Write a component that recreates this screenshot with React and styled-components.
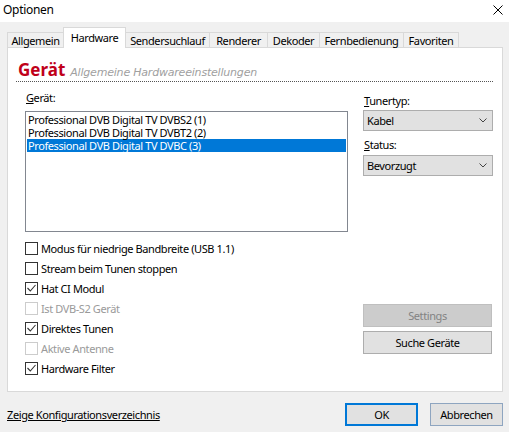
import React from "react"
import styled, { createGlobalStyle } from "styled-components"

const GlobalStyle = createGlobalStyle`
  html, body {
    margin: 0;
    padding: 0;
    background: #f0f0f0;
  }
  body {
    font-family: "Noto Sans", "Open Sans", sans-serif;
    font-size: 11px;
    letter-spacing: -0.4px;
    color: #000;
  }
  * { box-sizing: border-box; }
`

// fenster
const Window = styled.div`
  width: 509px;
  height: 432px;
  display: flex;
  flex-direction: column;
  background: #f0f0f0;
  overflow: hidden;
`
const TitleBar = styled.div`
  height: 22px;
  background: #fff;
  display: flex;
  justify-content: space-between;
  padding: 1px 6px 0 3px;
`
const Title = styled.span`
  font-size: 12px;
  line-height: 17px;
  letter-spacing: -0.3px;
`
const CloseIcon = styled.svg`
  margin-top: 4px;
`

// reiter
const Body = styled.div`
  padding: 5px 6px 0 7px;
`
const TabStrip = styled.div`
  display: flex;
  align-items: flex-end;
  height: 20px;
`
const Tab = styled.div`
  width: ${p => p.w}px;
  height: ${p => (p.active ? 21 : 15)}px;
  margin-bottom: ${p => (p.active ? -1 : 0)}px;
  margin-left: -1px;
  &:first-child { margin-left: 0; }
  border: 1px solid #d9d9d9;
  border-bottom: none;
  background: ${p => (p.active ? "#fff" : "#f0f0f0")};
  position: relative;
  z-index: ${p => (p.active ? 1 : 0)};
  display: flex;
  align-items: center;
  justify-content: center;
  white-space: nowrap;
  padding-bottom: ${p => (p.active ? 2 : 0)}px;
`
const Panel = styled.div`
  height: 345px;
  background: #fff;
  border: 1px solid #d9d9d9;
  padding: 0 9px 0 8px;
  display: flex;
  flex-direction: column;
`

// kopfzeile
const Header = styled.div`
  display: flex;
  align-items: baseline;
  gap: 5px;
  padding: 11px 0 1px 2px;
  border-bottom: 1px dotted #555;
  letter-spacing: 0;
`
const HeadTitle = styled.span`
  font-size: 17px;
  line-height: 21px;
  font-weight: bold;
  color: #c0001a;
`
const HeadSub = styled.span`
  font-family: "DejaVu Sans", sans-serif;
  font-style: italic;
  font-size: 11px;
  letter-spacing: -0.2px;
  color: #a0a0a0;
`

// inhalt
const Content = styled.div`
  display: grid;
  grid-template-columns: 323px 130px;
  justify-content: space-between;
  padding-left: 9px;
`
const Column = styled.div`
  display: flex;
  flex-direction: column;
`
const Label = styled.div`
  line-height: 16px;
  margin-top: ${p => p.mt}px;
  padding-left: 1px;
`
const ListBox = styled.div`
  margin-top: 5px;
  height: 121px;
  border: 1px solid #828790;
  padding: 1px;
`
const ListItem = styled.div`
  height: 13px;
  line-height: 13px;
  padding-left: 1px;
  white-space: nowrap;
  background: ${p => (p.selected ? "#0078d7" : "transparent")};
  color: ${p => (p.selected ? "#fff" : "#000")};
`
const Checks = styled.div`
  margin-top: 6px;
  display: flex;
  flex-direction: column;
`
const CheckRow = styled.label`
  height: 20px;
  display: flex;
  align-items: center;
  gap: 3px;
  color: ${p => (p.disabled ? "#9a9a9a" : "#000")};
`
const Box = styled.span`
  width: 13px;
  height: 13px;
  border: 1px solid ${p => (p.disabled ? "#cccccc" : "#333")};
  background: #fff;
  display: flex;
`
const Combo = styled.div`
  margin-top: ${p => p.mt}px;
  height: 21px;
  background: #e1e1e1;
  border: 1px solid #adadad;
  display: flex;
  align-items: center;
  justify-content: space-between;
  padding: 0 5px 0 3px;
`
const Button = styled.div`
  width: ${p => p.w || 129}px;
  height: 23px;
  margin-top: ${p => p.mt || 0}px;
  display: flex;
  align-items: center;
  justify-content: center;
  background: ${p => (p.disabled ? "#cccccc" : "#e1e1e1")};
  color: ${p => (p.disabled ? "#838383" : "#000")};
  border: ${p => (p.primary ? "2px solid #0078d7" : `1px solid ${p.border || (p.disabled ? "#bfbfbf" : "#adadad")}`)};
`

// fusszeile
const Footer = styled.div`
  flex: 1;
  display: flex;
  align-items: center;
  padding: 5px 6px 0 7px;
`
const Link = styled.a`
  color: #000;
  text-decoration: underline;
  margin-right: auto;
  cursor: pointer;
`
const FooterButtons = styled.div`
  display: flex;
  gap: 12px;
`

const Check = () => (
  <svg width="11" height="11" viewBox="0 0 11 11">
    <polyline points="1.5,5 4.3,8 9.5,2" fill="none" stroke="#333" strokeWidth="1.1" />
  </svg>
)

const Chevron = () => (
  <svg width="8" height="5" viewBox="0 0 8 5">
    <polyline points="0.5,0.5 4,4 7.5,0.5" fill="none" stroke="#444" strokeWidth="1" />
  </svg>
)

const tabs = [
  ["Allgemein", 57],
  ["Hardware", 63],
  ["Sendersuchlauf", 85],
  ["Renderer", 59],
  ["Dekoder", 53],
  ["Fernbedienung", 85],
  ["Favoriten", 56],
]

const geraete = [
  "Professional DVB Digital TV DVBS2 (1)",
  "Professional DVB Digital TV DVBT2 (2)",
  "Professional DVB Digital TV DVBC (3)",
]

const optionen = [
  { text: "Modus für niedrige Bandbreite (USB 1.1)" },
  { text: "Stream beim Tunen stoppen" },
  { text: "Hat CI Modul", checked: true },
  { text: "Ist DVB-S2 Gerät", disabled: true },
  { text: "Direktes Tunen", checked: true },
  { text: "Aktive Antenne", disabled: true },
  { text: "Hardware Filter", checked: true },
]

export default function App() {
  return (
    <>
      <GlobalStyle />
      <Window>
        <TitleBar>
          <Title>Optionen</Title>
          <CloseIcon width="10" height="10" viewBox="0 0 10 10">
            <path d="M0.5 0.5 L9.5 9.5 M9.5 0.5 L0.5 9.5" stroke="#000" strokeWidth="1" />
          </CloseIcon>
        </TitleBar>
        <Body>
          <TabStrip>
            {tabs.map(([name, w]) => (
              <Tab key={name} w={w} active={name === "Hardware"}>{name}</Tab>
            ))}
          </TabStrip>
          <Panel>
            <Header>
              <HeadTitle>Gerät</HeadTitle>
              <HeadSub>Allgemeine Hardwareeinstellungen</HeadSub>
            </Header>
            <Content>
              <Column>
                <Label mt={8}><u>G</u>erät:</Label>
                <ListBox>
                  {geraete.map((g, i) => (
                    <ListItem key={g} selected={i === 2}>{g}</ListItem>
                  ))}
                </ListBox>
                <Checks>
                  {optionen.map(o => (
                    <CheckRow key={o.text} disabled={o.disabled}>
                      <Box disabled={o.disabled}>{o.checked && <Check />}</Box>
                      {o.text}
                    </CheckRow>
                  ))}
                </Checks>
              </Column>
              <Column>
                <Label mt={11}><u>T</u>unertyp:</Label>
                <Combo mt={1}>Kabel<Chevron /></Combo>
                <Label mt={6}><u>S</u>tatus:</Label>
                <Combo mt={2}>Bevorzugt<Chevron /></Combo>
                <Button disabled mt={128}>Settings</Button>
                <Button mt={4}>Suche Geräte</Button>
              </Column>
            </Content>
          </Panel>
        </Body>
        <Footer>
          <Link>Zeige Konfigurationsverzeichnis</Link>
          <FooterButtons>
            <Button w={73} primary>OK</Button>
            <Button w={73} border="#8ea5c0">Abbrechen</Button>
          </FooterButtons>
        </Footer>
      </Window>
    </>
  )
}
